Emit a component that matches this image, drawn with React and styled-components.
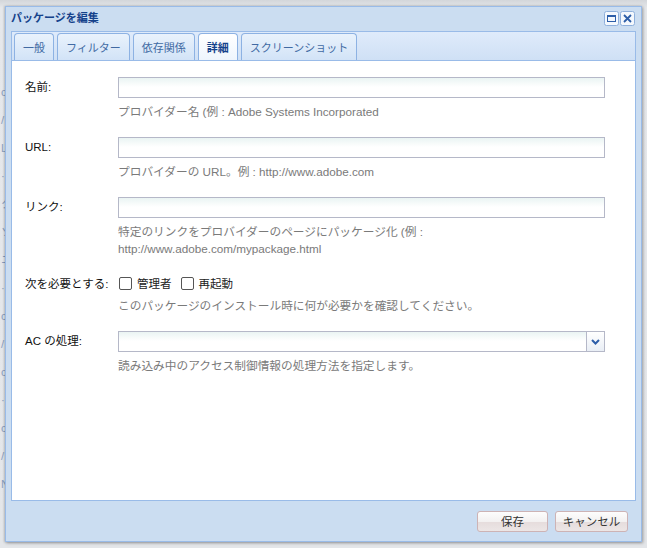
import React from "react";
import styled, { createGlobalStyle } from "styled-components";

const GlobalStyle = createGlobalStyle`
  html, body {
    margin: 0;
    padding: 0;
  }
  body {
    width: 647px;
    height: 548px;
    overflow: hidden;
    background: #e2e4e7;
    font-family: "Liberation Sans", "Noto Sans CJK JP", sans-serif;
  }
`;

const FONT = `"Liberation Sans", "Noto Sans CJK JP", sans-serif`;

const fields = [
  { label: "名前:", help: ["プロバイダー名 (例 : Adobe Systems Incorporated"] },
  { label: "URL:", help: ["プロバイダーの URL。例 : http://www.adobe.com"] },
  {
    label: "リンク:",
    help: [
      "特定のリンクをプロバイダーのページにパッケージ化 (例 :",
      "http://www.adobe.com/mypackage.html",
    ],
  },
];

const bgRows = ["c", "/", "L", "·", "ク", "ソ", "ニ", "·", "c", "/", "c", "·", "c", "/", "N"];

const App = () => {
  return (
    <>
      <GlobalStyle />
      <Desktop>
        <BackList>
          {bgRows.map((t, i) => (
            <BackItem key={i}>{t}</BackItem>
          ))}
        </BackList>
        <Window>
          <TitleBar>
            <Title>パッケージを編集</Title>
            <Tools>
              <Tool>
                <svg width="15" height="15" viewBox="0 0 15 15">
                  <rect x="0.5" y="0.5" width="14" height="14" rx="2" fill="#f4f8fd" stroke="#8fb0dc" />
                  <rect x="3.5" y="4.5" width="8" height="6" fill="none" stroke="#2d5ea8" />
                  <rect x="3" y="4" width="9" height="2" fill="#2d5ea8" />
                </svg>
              </Tool>
              <Tool>
                <svg width="15" height="15" viewBox="0 0 15 15">
                  <rect x="0.5" y="0.5" width="14" height="14" rx="2" fill="#f4f8fd" stroke="#8fb0dc" />
                  <path d="M4 4 L11 11 M11 4 L4 11" stroke="#2d5ea8" strokeWidth="1.8" />
                </svg>
              </Tool>
            </Tools>
          </TitleBar>

          <TabStrip>
            <Tab>一般</Tab>
            <Tab>フィルター</Tab>
            <Tab>依存関係</Tab>
            <Tab $active>詳細</Tab>
            <Tab>スクリーンショット</Tab>
          </TabStrip>

          <Body>
            {fields.map((f) => (
              <FormRow key={f.label}>
                <Label>{f.label}</Label>
                <FieldCol>
                  <TextInput type="text" />
                  <Help>
                    {f.help.map((h) => (
                      <div key={h}>{h}</div>
                    ))}
                  </Help>
                </FieldCol>
              </FormRow>
            ))}

            <FormRow>
              <Label>次を必要とする:</Label>
              <FieldCol>
                <CheckGroup>
                  <CheckItem>
                    <Box />
                    管理者
                  </CheckItem>
                  <CheckItem>
                    <Box />
                    再起動
                  </CheckItem>
                </CheckGroup>
                <Help>このパッケージのインストール時に何が必要かを確認してください。</Help>
              </FieldCol>
            </FormRow>

            <FormRow>
              <Label>AC の処理:</Label>
              <FieldCol>
                <Combo>
                  <ComboText />
                  <Trigger>
                    <svg width="9" height="6" viewBox="0 0 9 6">
                      <path d="M1 1 L4.5 4.5 L8 1" fill="none" stroke="#2d5ea8" strokeWidth="2" />
                    </svg>
                  </Trigger>
                </Combo>
                <Help>読み込み中のアクセス制御情報の処理方法を指定します。</Help>
              </FieldCol>
            </FormRow>
          </Body>

          <Footer>
            <Button $w={71}>保存</Button>
            <Button $w={73}>キャンセル</Button>
          </Footer>
        </Window>
      </Desktop>
    </>
  );
};

export default App;

const Desktop = styled.div`
  position: relative;
  width: 647px;
  height: 548px;
  overflow: hidden;
  background: linear-gradient(#d3d6da 0, #e6e8eb 8px, #e4e6e9 100%);
`;

const BackList = styled.div`
  display: flex;
  flex-direction: column;
  gap: 12px;
  padding-top: 84px;
  padding-left: 1px;
  font-family: ${FONT};
  font-size: 11px;
  color: #8ba0c0;
`;

const BackItem = styled.div`
  height: 16px;
  line-height: 16px;
`;

const Window = styled.div`
  position: absolute;
  left: 5px;
  top: 6px;
  width: 635px;
  height: 534px;
  border: 1px solid #99bbe8;
  background: #cbddf1;
  box-shadow: 1px 1px 3px rgba(0, 0, 0, 0.35), -1px 0 2px rgba(0, 0, 0, 0.15);
  display: flex;
  flex-direction: column;
  font-family: ${FONT};
`;

const TitleBar = styled.div`
  height: 24px;
  display: flex;
  align-items: center;
  justify-content: space-between;
  padding: 0 6px 0 5px;
`;

const Title = styled.div`
  font-size: 11px;
  font-weight: bold;
  color: #15428b;
  line-height: 14px;
  margin-top: -2px;
`;

const Tools = styled.div`
  display: flex;
  gap: 1px;
  margin-top: -2px;
`;

const Tool = styled.div`
  width: 15px;
  height: 15px;
  display: flex;
`;

const TabStrip = styled.div`
  margin: 0 5px;
  height: 28px;
  padding: 0 2px;
  border: 1px solid #99bbe8;
  background: linear-gradient(#dfebfb, #cfe0f5);
  display: flex;
  align-items: flex-end;
  gap: 3px;
`;

const Tab = styled.div`
  height: 26px;
  padding: 0 8px;
  display: flex;
  align-items: center;
  border: 1px solid #8db2e3;
  border-bottom: none;
  border-radius: 4px 4px 0 0;
  font-size: 11px;
  color: ${(p) => (p.$active ? "#15428b" : "#416aa3")};
  font-weight: ${(p) => (p.$active ? "bold" : "normal")};
  background: ${(p) =>
    p.$active
      ? "linear-gradient(#ffffff, #eef5fd)"
      : "linear-gradient(#e9f2fc, #d2e3f7)"};
`;

const Body = styled.div`
  flex: 1;
  margin: 0 5px;
  border: 1px solid #99bbe8;
  border-top: none;
  background: #fff;
  padding: 16px 30px 0 13px;
  display: flex;
  flex-direction: column;
  gap: 17px;
`;

const FormRow = styled.div`
  display: flex;
  align-items: flex-start;
`;

const Label = styled.div`
  width: 93px;
  flex: none;
  font-size: 11.5px;
  line-height: 21px;
  color: #111;
  white-space: nowrap;
`;

const FieldCol = styled.div`
  flex: 1;
  display: flex;
  flex-direction: column;
`;

const TextInput = styled.input`
  box-sizing: border-box;
  height: 21px;
  width: 100%;
  margin: 0;
  border: 1px solid #b5b8c8;
  background: linear-gradient(#eaf4f3, #ffffff 9px);
  outline: none;
`;

const Help = styled.div`
  padding-top: 5px;
  font-size: 11.7px;
  line-height: 17px;
  color: #7a7a7a;
`;

const CheckGroup = styled.div`
  height: 18px;
  display: flex;
  align-items: center;
  gap: 9px;
  margin-left: 1px;
`;

const CheckItem = styled.label`
  display: flex;
  align-items: center;
  gap: 5px;
  font-size: 11.5px;
  color: #222;
`;

const Box = styled.span`
  width: 11px;
  height: 11px;
  border: 1px solid #555;
  border-radius: 2px;
  background: #fff;
`;

const Combo = styled.div`
  height: 21px;
  display: flex;
`;

const ComboText = styled.div`
  flex: 1;
  box-sizing: border-box;
  border: 1px solid #b5b8c8;
  border-right: none;
  background: linear-gradient(#eaf4f3, #ffffff 9px);
`;

const Trigger = styled.div`
  width: 19px;
  box-sizing: border-box;
  border: 1px solid #b5b8c8;
  background: linear-gradient(#ffffff, #e9eef5);
  display: flex;
  align-items: center;
  justify-content: center;
`;

const Footer = styled.div`
  height: 40px;
  display: flex;
  align-items: center;
  justify-content: flex-end;
  gap: 7px;
  padding: 0 13px 0 0;
`;

const Button = styled.div`
  box-sizing: border-box;
  width: ${(p) => p.$w}px;
  height: 21px;
  display: flex;
  align-items: center;
  justify-content: center;
  border: 1px solid #cdb3b5;
  border-radius: 3px;
  background: linear-gradient(#fdfdfd 0%, #f3f1f1 50%, #e6dddd 55%, #ece6e6 100%);
  font-size: 11.5px;
  color: #333;
`;
